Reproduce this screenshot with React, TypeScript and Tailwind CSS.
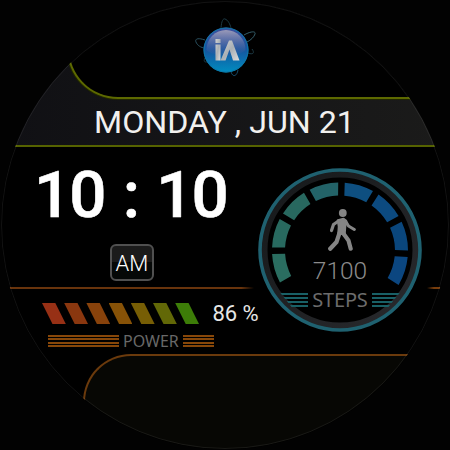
const SEGMENT_COLORS = [
  "#2a6d60",
  "#28695f",
  "#28685f",
  "#236368",
  "#0e4f80",
  "#0c4a80",
  "#0a467c",
  "#0b4680",
];

const POWER_COLORS = [
  "#973015",
  "#8a370f",
  "#88420b",
  "#875207",
  "#775e05",
  "#626807",
  "#3d7d08",
];

const polar = (r: number, deg: number) => {
  const a = (deg * Math.PI) / 180;
  return `${(82 + r * Math.sin(a)).toFixed(2)} ${(82.5 - r * Math.cos(a)).toFixed(2)}`;
};

const segmentPath = (index: number) => {
  const start = -118 + index * 30.5;
  const end = start + 25;
  return `M${polar(68, start)}A68 68 0 0 1 ${polar(68, end)}L${polar(55, end - 0.5)}A55 55 0 0 0 ${polar(55, start + 0.5)}Z`;
};

const Logo = () => (
  <svg viewBox="0 0 70 64" className="h-16 w-[70px]">
    <g fill="none" stroke="#1d3a45" strokeWidth="1">
      <path d="M30 15C30 7 32 3 34 4c3 1 5 5 6 9" />
      <path d="M14 25C5 22 4 25 5 27c1 3 5 6 9 6" stroke="#2b5160" />
      <path d="M53 20c7-4 12-4 11-1-1 3-4 6-8 8" stroke="#35606d" />
      <path d="M57 38c5 2 7 0 4-4" />
      <path d="M40 57c2 6 6 4 7-2" stroke="#174a68" />
      <path d="M14 43c-2 4 0 5 4 3" />
    </g>
    <circle cx="35" cy="35" r="22.5" fill="url(#orb)" />
    <circle cx="35" cy="35" r="22" fill="none" stroke="#0b78a8" strokeWidth="1" />
    <path d="M15.5 35a19.5 20 0 0 1 39 0c-6 7-33 7-39 0Z" fill="url(#gloss)" />
    <g fill="url(#chrome)">
      <path d="M24.500 24h5v4h-5zM24.500 29.500h5V45.500h-5z" />
      <path d="M29.500 45.500 38 25.500h3L48.500 45.500h-6.500l-3.500-11-4 11Z" />
    </g>
    <defs>
      <linearGradient id="orb" x1="0" y1="0" x2="0" y2="1">
        <stop offset="0" stopColor="#3e4f9f" />
        <stop offset=".5" stopColor="#1556a0" />
        <stop offset="1" stopColor="#008dc0" />
      </linearGradient>
      <linearGradient id="gloss" x1="0" y1="0" x2="0" y2="1">
        <stop offset="0" stopColor="#a09fba" stopOpacity=".95" />
        <stop offset="1" stopColor="#465a9c" stopOpacity=".1" />
      </linearGradient>
      <linearGradient id="chrome" x1="0" y1="0" x2="1" y2="1">
        <stop offset="0" stopColor="#d2d2d2" />
        <stop offset=".5" stopColor="#a9b0b5" />
        <stop offset="1" stopColor="#dcdcdc" />
      </linearGradient>
    </defs>
  </svg>
);

const Gauge = () => (
  <svg viewBox="0 0 164 164" className="col-start-1 row-start-1 size-[164px]">
    <circle cx="82" cy="82" r="76" fill="#000" stroke="url(#bezel)" strokeWidth="7" />
    <circle cx="82" cy="82" r="80" fill="none" stroke="#1f6170" strokeWidth="3.6" />
    {SEGMENT_COLORS.map((color, i) => (
      <path key={i} d={segmentPath(i)} fill={color} />
    ))}
    <defs>
      <linearGradient id="bezel" x1="0" y1="0" x2="1" y2="1">
        <stop offset="0" stopColor="#16191b" />
        <stop offset=".35" stopColor="#1c1e20" />
        <stop offset="1" stopColor="#292a2e" />
      </linearGradient>
    </defs>
  </svg>
);

const Walker = () => (
  <svg viewBox="0 0 28 42" className="ml-1 h-[42px] w-7" fill="none" stroke="#858585" strokeLinecap="round" strokeLinejoin="round">
    <circle cx="14.8" cy="4" r="3.9" fill="#858585" stroke="none" />
    <path d="M10 11.500 15.500 10l2.500 2-1 6-.5 7-6-.5.500-7Z" fill="#858585" strokeWidth="2.5" />
    <path d="M10.500 12 5.500 15.500 3.500 21.500" strokeWidth="3.2" />
    <path d="m17.500 12 3 5 5.800 3.500" strokeWidth="3" />
    <path d="M11.500 24 8.500 33l-6.300 6.800" strokeWidth="4.2" />
    <path d="m15 24 5.500 7.500 2.200 8.200" strokeWidth="4.2" />
  </svg>
);

const Stripes = ({ className }: { className: string }) => (
  <div className={`flex flex-col justify-between ${className}`}>
    <i className="h-[2px] bg-current" />
    <i className="h-[2px] bg-current" />
    <i className="h-[2px] bg-current" />
    <i className="h-[2px] bg-current" />
  </div>
);

const StepsDial = () => (
  <div className="mt-[21px] grid size-[164px] shrink-0">
    <Gauge />
    <div className="col-start-1 row-start-1 flex flex-col items-center pt-[41px]">
      <Walker />
      <div className="mt-[6px] text-[24.5px] leading-[28px] font-light text-[#8b8b8b]">7100</div>
      <div className="mt-px flex items-center gap-1 text-[#196066]">
        <Stripes className="h-[14px] w-7 [clip-path:polygon(0_0,100%_0,100%_100%,40%_100%)]" />
        <span className="font-['Noto_Sans'] text-[20px] leading-[28px] tracking-[-0.2px] text-[#6c6c6c]">STEPS</span>
        <Stripes className="h-[14px] w-7 [clip-path:polygon(0_0,100%_0,60%_100%,0_100%)]" />
      </div>
    </div>
  </div>
);

const Power = () => (
  <div className="pt-[13px]">
    <div className="flex h-[23px] items-center pl-[42px]">
      <div className="flex">
        {POWER_COLORS.map((color) => (
          <div
            key={color}
            className="mr-[-1.6px] h-[21px] w-[23.8px] [clip-path:polygon(0_0,56%_0,100%_100%,44%_100%)]"
            style={{ backgroundColor: color }}
          />
        ))}
      </div>
      <span className="ml-[15px] text-[22px] leading-6 whitespace-nowrap text-[#e6e6e6]">86 %</span>
    </div>
    <div className="mt-1 flex h-6 items-center pl-12 text-[#874709]">
      <Stripes className="h-[13px] w-[71px]" />
      <span className="mx-1 w-14 font-['Noto_Sans'] text-[16px] leading-6 text-[#686868]">POWER</span>
      <Stripes className="h-[13px] w-[31px]" />
    </div>
  </div>
);

export default function App() {
  return (
    <div className="size-[450px] overflow-hidden bg-[#020202] font-[Roboto,sans-serif]">
      <div className="relative flex size-[450px] flex-col bg-black [clip-path:circle(224px)]">
        <div className="bg-linear-to-r from-[#101014] to-[#1b1b1a]">
          <header className="ml-[67px] flex h-[99px] justify-center rounded-bl-[51px] border-b-2 border-l-2 border-[#5d6900] bg-black pt-[15px] pr-[68px] shadow-[0_0_0_1px_#202600]">
            <Logo />
          </header>
          <div className="h-[48px] border-b-2 border-[#566300] pr-px text-center text-[32.2px] leading-[46px] text-[#f1f0ee]">
            MONDAY , JUN 21
          </div>
        </div>

        <main className="flex h-[207px]">
          <section className="w-[258px] shrink-0">
            <div className="pt-[10px] pl-[34px] text-[65.5px] leading-[76px] font-medium tracking-[-2px] whitespace-nowrap text-white [-webkit-text-stroke:0.6px_#fff] [word-spacing:4px]">
              10 : 10
            </div>
            <div className="mt-[11px] ml-[110px] flex h-[37px] w-11 items-center justify-center rounded-[6px] border-2 border-[#505050] bg-linear-to-b from-[#1b1b1b] from-50% to-[#050807] to-50% pt-[2px] text-[22px] font-light text-white">
              AM
            </div>
            <div className="mt-[6px] h-[2px] w-[254px] bg-linear-to-r from-[#69340c] from-95% to-transparent" />
            <Power />
          </section>
          <StepsDial />
          <div className="mt-[140px] ml-[5px] h-[2px] flex-1 bg-linear-to-r from-transparent to-[#783d0c] to-30%" />
        </main>

        <footer className="ml-[83px] flex-1 rounded-tl-[48px] border-t-2 border-l-2 border-[#6b3a0c] bg-[#070704]" />
        <div className="pointer-events-none absolute inset-px rounded-full border border-white/7" />
      </div>
    </div>
  );
}
